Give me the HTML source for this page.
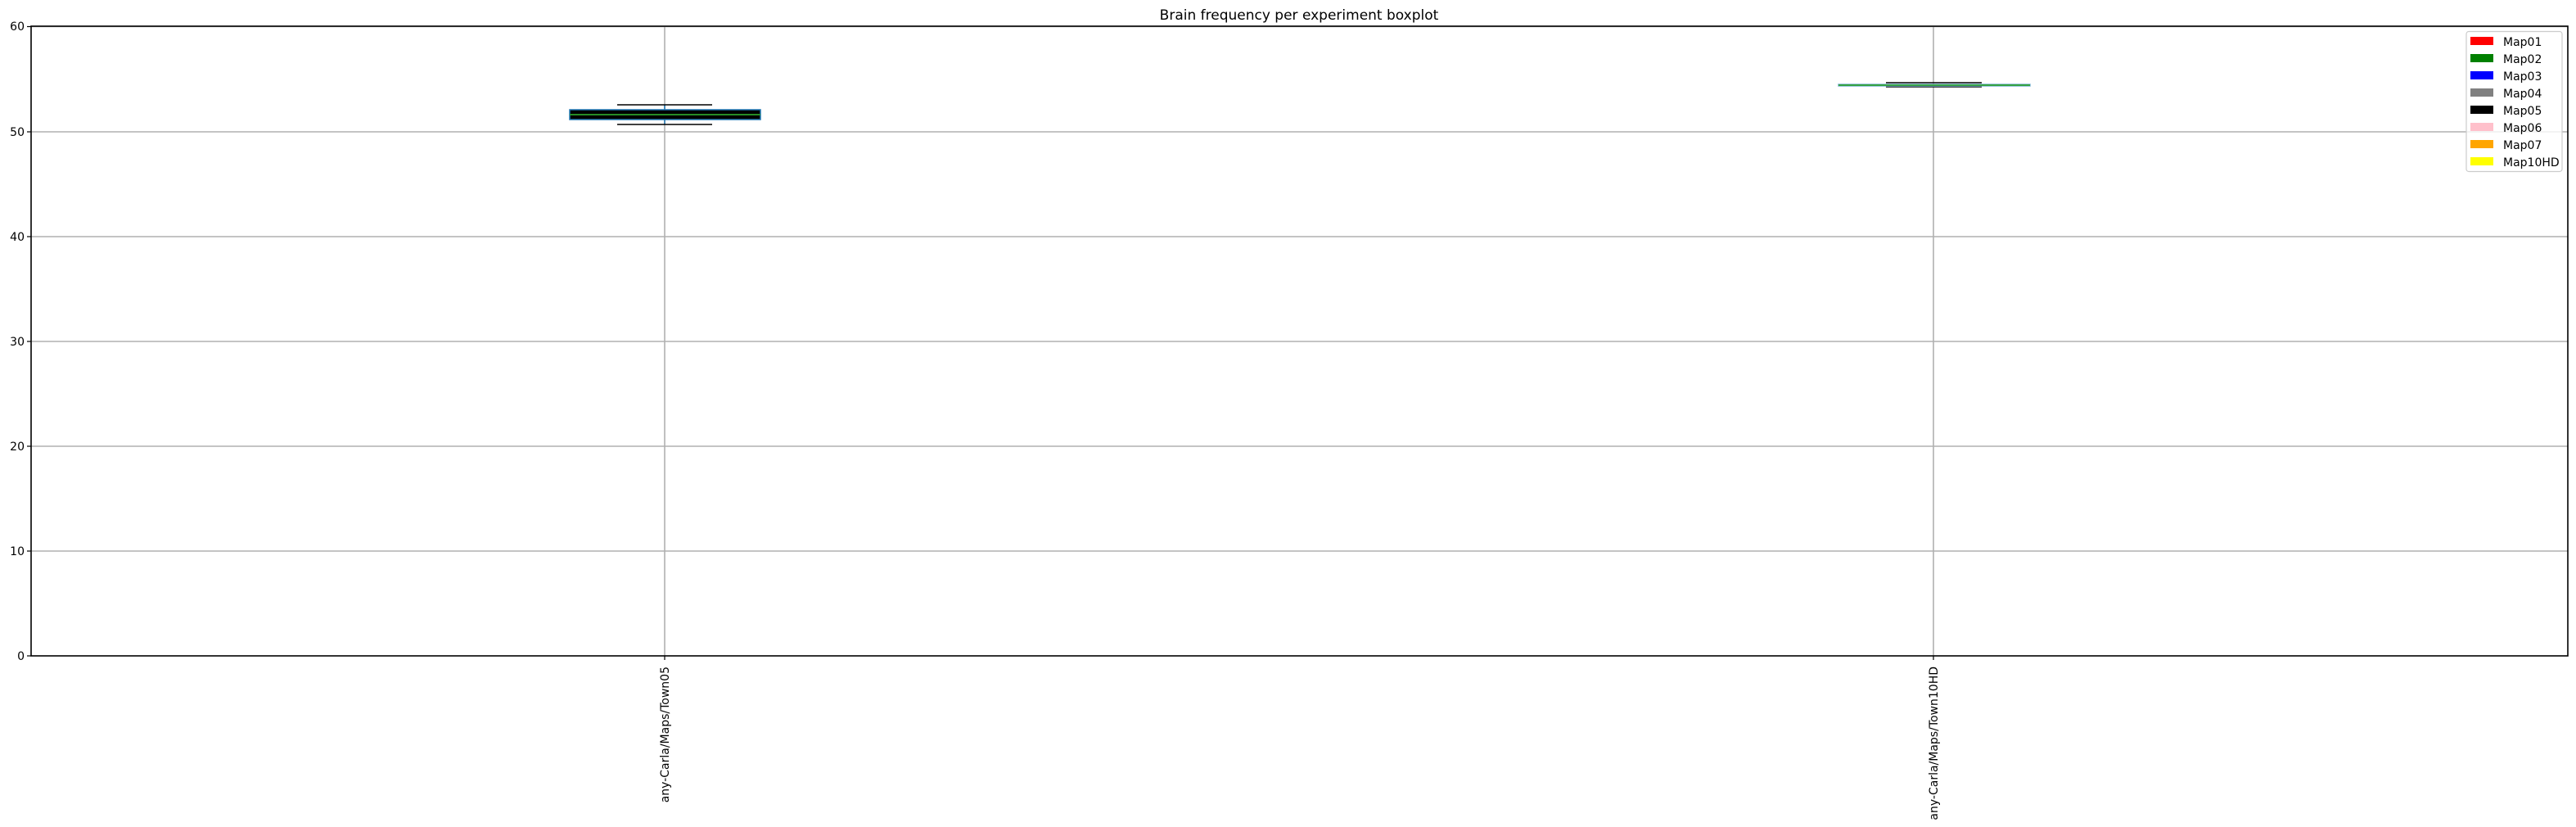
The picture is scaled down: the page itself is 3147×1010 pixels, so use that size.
<!DOCTYPE html>
<html><head><meta charset="utf-8"><style>html,body{margin:0;padding:0;background:#fff;}svg{display:block}</style></head>
<body>
<svg width="3147" height="1010" xmlns="http://www.w3.org/2000/svg" font-family="DejaVu Sans, Liberation Sans, sans-serif">
<rect width="3147" height="1010" fill="#fff"/>
<g stroke="#b0b0b0" stroke-width="1.6">
<line x1="38" x2="3137" y1="32.5" y2="32.5"/>
<line x1="38" x2="3137" y1="161" y2="161"/>
<line x1="38" x2="3137" y1="289" y2="289"/>
<line x1="38" x2="3137" y1="417" y2="417"/>
<line x1="38" x2="3137" y1="545" y2="545"/>
<line x1="38" x2="3137" y1="673" y2="673"/>
<line x1="812" x2="812" y1="32" y2="801"/>
<line x1="2362" x2="2362" y1="32" y2="801"/>
</g>
<!-- box 1 -->
<line x1="812" x2="812" y1="128" y2="152" stroke="#1f77b4" stroke-width="1.5"/>
<rect x="696" y="134" width="233" height="12" fill="#000" stroke="#1f77b4" stroke-width="1.5"/>
<line x1="696" x2="929" y1="140" y2="140" stroke="#2ca02c" stroke-width="1.8"/>
<line x1="754" x2="870" y1="128" y2="128" stroke="#000" stroke-width="1.6"/>
<line x1="754" x2="870" y1="152" y2="152" stroke="#000" stroke-width="1.6"/>
<!-- box 2 -->
<line x1="2304" x2="2421" y1="101" y2="101" stroke="#000" stroke-width="1.6"/>
<line x1="2304" x2="2421" y1="106" y2="106" stroke="#000" stroke-width="1.6"/>
<rect x="2246" y="103" width="234" height="2" fill="#000" stroke="#7fb3d9" stroke-width="1.5"/>
<line x1="2246" x2="2480" y1="104" y2="104" stroke="#2ca02c" stroke-width="1.8"/>
<!-- axes -->
<rect x="38" y="32" width="3099" height="769" fill="none" stroke="#000" stroke-width="1.6"/>
<g stroke="#000" stroke-width="1.2">
<line x1="33" x2="38" y1="32.5" y2="32.5"/><line x1="33" x2="38" y1="161" y2="161"/>
<line x1="33" x2="38" y1="289" y2="289"/><line x1="33" x2="38" y1="417" y2="417"/>
<line x1="33" x2="38" y1="545" y2="545"/><line x1="33" x2="38" y1="673" y2="673"/>
<line x1="33" x2="38" y1="801" y2="801"/>
<line x1="812" x2="812" y1="801" y2="806"/><line x1="2362" x2="2362" y1="801" y2="806"/>
</g>
<g font-size="14" fill="#000" text-anchor="end">
<text x="30" y="37">60</text><text x="30" y="166">50</text><text x="30" y="294">40</text>
<text x="30" y="422">30</text><text x="30" y="550">20</text><text x="30" y="678">10</text>
<text x="30" y="806">0</text>
</g>
<text x="1587" y="24" font-size="17" text-anchor="middle">Brain frequency per experiment boxplot</text>
<text transform="translate(817,814) rotate(-90)" font-size="14" text-anchor="end">any-Carla/Maps/Town05</text>
<text transform="translate(2367,814) rotate(-90)" font-size="14" text-anchor="end">any-Carla/Maps/Town10HD</text>
<!-- legend -->
<rect x="3013" y="38.5" width="117" height="171" rx="3" fill="#fff" fill-opacity="0.8" stroke="#ccc" stroke-width="1.2"/>
<g font-size="14" fill="#000">
<rect x="3018" y="45" width="28" height="10" fill="red"/><text x="3058" y="56">Map01</text>
<rect x="3018" y="66" width="28" height="10" fill="green"/><text x="3058" y="77">Map02</text>
<rect x="3018" y="87" width="28" height="10" fill="blue"/><text x="3058" y="98">Map03</text>
<rect x="3018" y="108" width="28" height="10" fill="gray"/><text x="3058" y="119">Map04</text>
<rect x="3018" y="129" width="28" height="10" fill="black"/><text x="3058" y="140">Map05</text>
<rect x="3018" y="150" width="28" height="10" fill="pink"/><text x="3058" y="161">Map06</text>
<rect x="3018" y="171" width="28" height="10" fill="orange"/><text x="3058" y="182">Map07</text>
<rect x="3018" y="192" width="28" height="10" fill="yellow"/><text x="3058" y="203">Map10HD</text>
</g>
</svg>
</body></html>
